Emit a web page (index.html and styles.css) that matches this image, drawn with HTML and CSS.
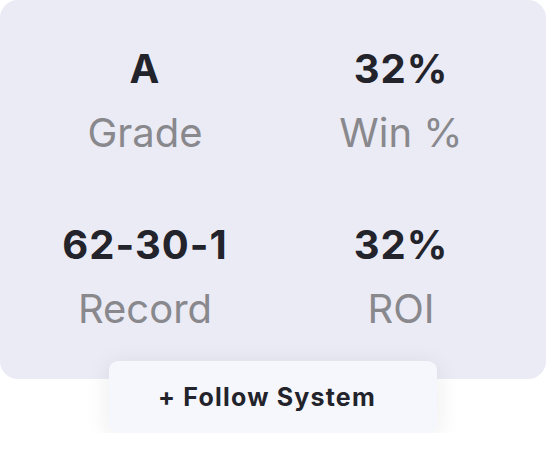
FILE: index.html
```html
<!DOCTYPE html>
<html lang="en">

<head>
  <meta charset="UTF-8">
  <meta name="viewport" content="width=device-width, initial-scale=1.0">
  <title>System Stats</title>
  <link rel="stylesheet" href="styles.css">
</head>

<body>
  <section class="stats-card" aria-label="System stats">
    <div class="stat">
      <span class="stat-value">A</span>
      <span class="stat-label">Grade</span>
    </div>
    <div class="stat">
      <span class="stat-value">32%</span>
      <span class="stat-label">Win %</span>
    </div>
    <div class="stat">
      <span class="stat-value">62-30-1</span>
      <span class="stat-label">Record</span>
    </div>
    <div class="stat">
      <span class="stat-value">32%</span>
      <span class="stat-label">ROI</span>
    </div>
  </section>

  <div class="follow-wrap">
    <button class="follow-btn">+ Follow System</button>
  </div>
</body>

</html>
```

FILE: styles.css
```css
body {
  margin: 0;
  padding: 0;
  background: #ffffff;
  font-family: Inter, "Noto Sans", Arial, sans-serif;
}

.stats-card {
  background: #ebebf5;
  border-radius: 18px;
  padding: 45px 17px 46px;
  display: grid;
  grid-template-columns: 1fr 1fr;
  row-gap: 64px;
}

.stat {
  display: flex;
  flex-direction: column;
  align-items: center;
  gap: 16px;
}

.stat-value {
  font-size: 40px;
  line-height: 48px;
  font-weight: 700;
  letter-spacing: 1px;
  color: #23232b;
}

.stat-label {
  font-size: 40px;
  line-height: 48px;
  font-weight: 400;
  color: #88888d;
}

.follow-wrap {
  display: flex;
  justify-content: center;
  margin-top: -18px;
}

.follow-btn {
  width: 328px;
  height: 72px;
  padding: 0 12px 0 0;
  border: none;
  border-radius: 9px;
  background: #f6f7fc;
  box-shadow: 0 4px 24px rgba(30, 30, 60, 0.09);
  font-family: inherit;
  font-size: 25px;
  font-weight: 700;
  letter-spacing: 1.2px;
  color: #23232b;
  cursor: pointer;
}
```
